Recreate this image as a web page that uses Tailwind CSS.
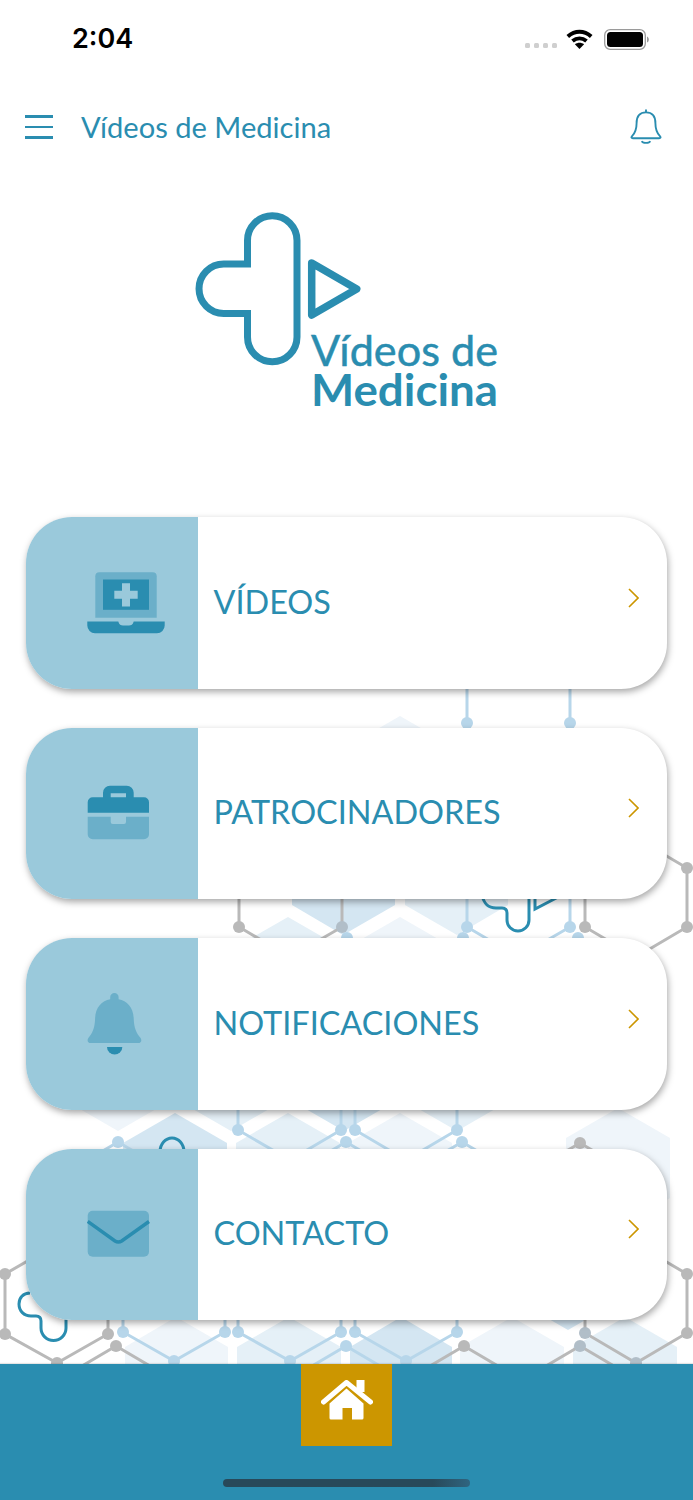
<!DOCTYPE html>
<html lang="es">
<head>
<meta charset="utf-8">
<title>Vídeos de Medicina</title>
<script src="https://cdn.jsdelivr.net/npm/@tailwindcss/browser@4"></script>
</head>
<body class="bg-white">
<div class="relative w-[693px] h-[1500px] overflow-hidden bg-white font-['Lato',sans-serif]">

  <!-- decorative hexagon network behind the cards -->
  <svg class="absolute top-0 left-0" width="693" height="1364" viewBox="0 0 693 1364" fill="none">
    <g>
      <polygon points="400,716 452,746 348,746" fill="#eff5fa"/>
      <!-- row around 905-935 -->
      <polygon points="292,860 395,860 395,905 343,935 292,905" fill="#d4e6f2"/>
      <polygon points="405,860 508,860 508,905 457,935 405,905" fill="#e5f0f7"/>
      <polygon points="288,917 340,947 340,960 236,960 236,947" fill="#e5f0f7"/>
      <polygon points="400,917 452,947 452,960 348,960 348,947" fill="#eff5fa"/>
      <!-- row around 1110-1145 -->
      <polygon points="66,1060 170,1060 170,1101 118,1131 66,1101" fill="#eff5fa"/>
      <polygon points="179,1060 283,1060 283,1101 231,1131 179,1101" fill="#e5f0f7"/>
      <polygon points="292,1060 396,1060 396,1101 344,1131 292,1101" fill="#d4e6f2"/>
      <polygon points="405,1060 509,1060 509,1101 457,1131 405,1101" fill="#e5f0f7"/>
      <polygon points="175,1113 227,1143 227,1160 123,1160 123,1143" fill="#d4e6f2"/>
      <polygon points="288,1113 340,1143 340,1160 236,1160 236,1143" fill="#e5f0f7"/>
      <polygon points="400,1113 452,1143 452,1160 348,1160 348,1143" fill="#eff5fa"/>
      <polygon points="618,1108 670,1138 670,1198 618,1228 566,1198 566,1138" fill="#eff5fa"/>
      <!-- row above the bottom bar -->
      <polygon points="516,1270 620,1270 620,1300 568,1330 516,1300" fill="#d4e6f2"/>
      <polygon points="176,1317 228,1347 228,1364 125,1364 125,1347" fill="#eff5fa"/>
      <polygon points="289,1317 341,1347 341,1364 237,1364 237,1347" fill="#e5f0f7"/>
      <polygon points="401,1317 452,1347 452,1364 350,1364 350,1347" fill="#d4e6f2"/>
      <polygon points="512,1317 564,1347 564,1364 460,1364 460,1347" fill="#eff5fa"/>
      <polygon points="625,1317 677,1347 677,1364 573,1364 573,1347" fill="#e5f0f7"/>
    </g>

    <g stroke="#b7d6ea" stroke-width="3" fill="#b7d6ea">
      <path fill="none" d="M467 664V723M570 664V723M467 868V927L518 957L570 927V868M463 938L412 968M463 938L514 968M578 938L527 968M578 938L629 968M347 938L296 968M347 938L398 968"/>
      <path fill="none" d="M238 1070V1130L290 1160L341 1130V1070M355 1070V1130L406 1160L457 1130V1070M118 1142L67 1172M118 1142L169 1172M346 1142L295 1172M346 1142L397 1172M462 1142L411 1172M462 1142L513 1172"/>
      <path fill="none" d="M123 1300V1332L174 1361L225 1332V1300M238 1300V1332L290 1361L341 1332V1300M355 1300V1332L406 1361L457 1332V1300M346 1346L295 1376M346 1346L397 1376"/>
      <g stroke="none">
        <circle cx="467" cy="723" r="6"/><circle cx="570" cy="723" r="6"/>
        <circle cx="467" cy="927" r="6"/><circle cx="570" cy="927" r="6"/><circle cx="463" cy="938" r="6"/><circle cx="578" cy="938" r="6"/><circle cx="347" cy="938" r="6"/>
        <circle cx="238" cy="1130" r="6"/><circle cx="341" cy="1130" r="6"/><circle cx="355" cy="1130" r="6"/><circle cx="457" cy="1130" r="6"/>
        <circle cx="118" cy="1142" r="6"/><circle cx="346" cy="1142" r="6"/><circle cx="462" cy="1142" r="6"/>
        <circle cx="123" cy="1332" r="6"/><circle cx="225" cy="1332" r="6"/><circle cx="238" cy="1332" r="6"/><circle cx="341" cy="1332" r="6"/><circle cx="355" cy="1332" r="6"/><circle cx="457" cy="1332" r="6"/>
        <circle cx="174" cy="1361" r="6"/><circle cx="290" cy="1361" r="6"/><circle cx="406" cy="1361" r="6"/><circle cx="346" cy="1346" r="6"/>
      </g>
    </g>

    <g stroke="#b9b9b9" stroke-width="3" fill="#b9b9b9">
      <path fill="none" d="M636 838L687 868V927L636 957L585 927V868M239 868V927L290 957L342 927V868"/>
      <path fill="none" d="M580 1143L529 1173M580 1143L631 1173"/>
      <path fill="none" d="M57 1244L5 1274V1334L57 1363L108 1334V1274M116 1346L65 1376M116 1346L167 1376M464 1346L413 1376M464 1346L515 1376M580 1346L529 1376M580 1346L631 1376M636 1244L687 1274V1333L636 1363L585 1333V1290"/>
      <g stroke="none">
        <circle cx="687" cy="868" r="6"/><circle cx="687" cy="927" r="6"/><circle cx="585" cy="927" r="6"/><circle cx="239" cy="927" r="6"/><circle cx="342" cy="927" r="6" fill="#b1bec8"/>
        <circle cx="580" cy="1143" r="6"/>
        <circle cx="5" cy="1274" r="6"/><circle cx="5" cy="1334" r="6"/><circle cx="108" cy="1334" r="6"/><circle cx="57" cy="1363" r="6"/><circle cx="116" cy="1346" r="6"/>
        <circle cx="464" cy="1346" r="6"/><circle cx="580" cy="1346" r="6" fill="#b1bec8"/><circle cx="585" cy="1333" r="6" fill="#b1bec8"/><circle cx="687" cy="1274" r="6"/><circle cx="687" cy="1333" r="6"/><circle cx="636" cy="1363" r="6" fill="#b1bec8"/>
      </g>
    </g>

    <!-- ghost logo fragments -->
    <g stroke="#2a8db0" stroke-width="3" fill="none">
      <path d="M482 895C484 904 488 908 496 908H502Q507 908 507 913V920A11 11 0 0 0 529 920V895"/>
      <path d="M535 895V909L562 895"/>
      <path d="M160 1152A12 14 0 0 1 184 1152"/>
      <path d="M30 1293C23 1293 19 1298 19 1304C19 1311 24 1316 31 1316H36Q41 1316 41 1321V1328A12.5 12.5 0 0 0 66 1328V1310"/>
    </g>
  </svg>

  <div class="relative flex flex-col h-[1500px]">
    <!-- status bar -->
    <div class="relative h-[78px] flex items-center justify-between pl-[72px] pr-[44px]">
      <span class="font-['Inter',sans-serif] font-semibold text-[27px] leading-[34px] text-black">2:04</span>
      <div class="flex items-center gap-[11px]">
        <svg width="33" height="6" viewBox="0 0 33 6" class="mt-[14px] mr-[-3px]"><g fill="#cfcfcf"><rect x="0" y="0" width="5" height="5" rx="1.5"/><rect x="9" y="0" width="5" height="5" rx="1.5"/><rect x="18" y="0" width="5" height="5" rx="1.500"/><rect x="27" y="0" width="5" height="5" rx="1.5"/></g></svg>
        <svg width="27" height="20" viewBox="0 0 27 20" fill="none" stroke="#000" stroke-width="4"><path d="M1.800 7.500C9 1.300 18 1.300 25.200 7.500"/><path d="M6.500 12C10.800 8.500 16.200 8.500 20.500 12"/><path d="M13.500 20L8.900 15.200C11.700 13.200 15.300 13.200 18.100 15.200Z" fill="#000" stroke="none"/></svg>
        <svg width="45" height="21" viewBox="0 0 45 21" fill="none"><rect x="0.7" y="0.7" width="40.6" height="19.6" rx="5.5" stroke="#9a9a9a" stroke-width="1.3"/><rect x="3" y="3" width="36" height="15" rx="3.5" fill="#000"/><path d="M43 7.500C44.200 8 44.800 9 44.800 10.500C44.800 12 44.200 13 43 13.500Z" fill="#9a9a9a"/></svg>
      </div>
    </div>

    <!-- header -->
    <div class="h-[98px] flex items-center pl-[25px] pr-[31px]">
      <div class="flex flex-col gap-[8px] w-[28px]">
        <div class="h-[2.5px] bg-[#2a8db0]"></div>
        <div class="h-[2.5px] bg-[#2a8db0]"></div>
        <div class="h-[2.5px] bg-[#2a8db0]"></div>
      </div>
      <span class="ml-[28px] text-[29.1px] leading-[36px] text-[#2a8db0]">Vídeos de Medicina</span>
      <svg class="ml-auto mt-[-2px]" width="32" height="36" viewBox="0 0 34 38" fill="none" stroke="#2a8db0" stroke-width="2" stroke-linejoin="round"><path d="M17 1.500V4.500"/><path d="M17 4.500C10 4.500 7 9.500 7 16C7 24 5 27 2 30C1 31 1.500 32 3 32H31C32.500 32 33 31 32 30C29 27 27 24 27 16C27 9.500 24 4.500 17 4.500Z"/><path d="M12.500 35C13.500 37.500 20.500 37.500 21.500 35"/></svg>
    </div>

    <!-- logo -->
    <div class="h-[341px]">
      <svg width="693" height="341" viewBox="0 176 693 341" fill="none">
        <path d="M247.500 264H223.700A24.700 24.700 0 0 0 223.700 313.400H247.500V337A24.750 24.750 0 0 0 297 337V240.500A24.750 24.750 0 0 0 247.500 240.500Z" stroke="#2a8db0" stroke-width="7"/>
        <path d="M311.700 263L356.700 289L311.700 315Z" stroke="#2a8db0" stroke-width="7.500" stroke-linejoin="round"/>
        <text x="311" y="366" font-family="Lato, sans-serif" font-size="43" fill="#2a8db0" stroke="#2a8db0" stroke-width="0.5" textLength="187" lengthAdjust="spacingAndGlyphs">Vídeos de</text>
        <text x="311" y="406" font-family="Lato, sans-serif" font-size="43" font-weight="700" fill="#2a8db0" textLength="187" lengthAdjust="spacingAndGlyphs">Medicina</text>
      </svg>
    </div>

    <!-- menu cards -->
    <div class="flex flex-col gap-[39px] px-[26px]">
      <div class="flex h-[171.5px] rounded-[46px] overflow-hidden bg-white shadow-[1px_3px_7px_rgba(0,0,0,0.35)]">
        <div class="w-[171.5px] bg-[#9ac9db] flex items-center pl-[61px]">
          <svg width="78" height="62" viewBox="87 571.5 78 62">
            <path d="M95.300 617.300V575.700A4 4 0 0 1 99.300 571.700H152.700A4 4 0 0 1 156.700 575.700V617.300Z" fill="#6bafc9"/>
            <rect x="103" y="579" width="46" height="30.3" fill="#2a8db0"/>
            <path d="M122 582.700H130V590.300H137.700V598.300H130V606H122V598.300H114.300V590.300H122Z" fill="#9ac9db"/>
            <path d="M87.300 621H118.300C119 624 121 625 123 625H129C131 625 133 624 133.700 621H164.700V625A7.700 7.700 0 0 1 157 632.700H95A7.700 7.700 0 0 1 87.300 625Z" fill="#2a8db0"/>
          </svg>
        </div>
        <div class="flex-1 flex items-center justify-between pl-[16px] pr-[28px]">
          <span class="text-[32.4px] leading-[40px] mt-[-2px] text-[#2a8db0]">VÍDEOS</span>
          <svg class="mt-[-10px]" width="11" height="20" viewBox="0 0 11 20" fill="none" stroke="#cc9600" stroke-width="1.6"><path d="M1 1L10 10L1 19"/></svg>
        </div>
      </div>

      <div class="flex h-[171.5px] rounded-[46px] overflow-hidden bg-white shadow-[1px_3px_7px_rgba(0,0,0,0.35)]">
        <div class="w-[171.5px] bg-[#9ac9db] flex items-center pl-[61px]">
          <svg width="64" height="56" viewBox="87 785 64 56">
            <path fill-rule="evenodd" d="M110 785.700H126.700A7 7 0 0 1 133.700 792.700V797.300H144A5 5 0 0 1 149 802.300V812.700H87.700V802.300A5 5 0 0 1 92.700 797.300H103V792.700A7 7 0 0 1 110 785.700ZM110.700 793.300V797.300H126V793.300Z" fill="#2a8db0"/>
            <path d="M87.700 816.700H110.700V822A2 2 0 0 0 112.700 824H124A2 2 0 0 0 126 822V816.700H149V834.300A5 5 0 0 1 144 839.300H92.700A5 5 0 0 1 87.700 834.300Z" fill="#6bafc9"/>
          </svg>
        </div>
        <div class="flex-1 flex items-center justify-between pl-[16px] pr-[28px]">
          <span class="text-[32.4px] leading-[40px] mt-[-2px] text-[#2a8db0]">PATROCINADORES</span>
          <svg class="mt-[-10px]" width="11" height="20" viewBox="0 0 11 20" fill="none" stroke="#cc9600" stroke-width="1.6"><path d="M1 1L10 10L1 19"/></svg>
        </div>
      </div>

      <div class="flex h-[171.5px] rounded-[46px] overflow-hidden bg-white shadow-[1px_3px_7px_rgba(0,0,0,0.35)]">
        <div class="w-[171.5px] bg-[#9ac9db] flex items-center pl-[61px]">
          <svg width="56" height="62" viewBox="87 992.5 56 62">
            <path d="M114.400 992.600A4.200 4.200 0 0 1 118.600 996.800V998.800C127 1000.500 133.500 1007 133.700 1018C134 1028 136.500 1032.500 140.400 1037.300C142.300 1039.600 141 1042.600 138.300 1042.600H90.600C87.900 1042.600 86.600 1039.600 88.500 1037.300C92.400 1032.500 94.800 1028 95.100 1018C95.300 1007 101.800 1000.500 110.200 998.800V996.800A4.200 4.200 0 0 1 114.400 992.600Z" fill="#6bafc9"/>
            <path d="M107 1046.400H122.300A7.650 7.650 0 0 1 107 1046.400Z" fill="#2a8db0"/>
          </svg>
        </div>
        <div class="flex-1 flex items-center justify-between pl-[16px] pr-[28px]">
          <span class="text-[32.4px] leading-[40px] mt-[-2px] text-[#2a8db0]">NOTIFICACIONES</span>
          <svg class="mt-[-10px]" width="11" height="20" viewBox="0 0 11 20" fill="none" stroke="#cc9600" stroke-width="1.6"><path d="M1 1L10 10L1 19"/></svg>
        </div>
      </div>

      <div class="flex h-[171.5px] rounded-[46px] overflow-hidden bg-white shadow-[1px_3px_7px_rgba(0,0,0,0.35)]">
        <div class="w-[171.5px] bg-[#9ac9db] flex items-center pl-[61px]">
          <svg width="64" height="48" viewBox="87 1210 64 48">
            <rect x="87.7" y="1210.7" width="61.3" height="46" rx="5" fill="#6bafc9"/>
            <path d="M87.700 1221.500L115 1241Q118.300 1243.200 121.700 1241L149 1221.500" fill="none" stroke="#2a8db0" stroke-width="3.4"/>
          </svg>
        </div>
        <div class="flex-1 flex items-center justify-between pl-[16px] pr-[28px]">
          <span class="text-[32.4px] leading-[40px] mt-[-2px] text-[#2a8db0]">CONTACTO</span>
          <svg class="mt-[-10px]" width="11" height="20" viewBox="0 0 11 20" fill="none" stroke="#cc9600" stroke-width="1.6"><path d="M1 1L10 10L1 19"/></svg>
        </div>
      </div>
    </div>

    <!-- bottom bar -->
    <div class="mt-auto relative h-[136px] bg-[#2a8db0] shadow-[0_-1px_1px_rgba(0,0,0,0.1)] flex flex-col items-center">
      <div class="w-[91px] h-[82px] bg-[#cc9600] flex justify-center pt-[16px]">
        <svg width="52" height="40" viewBox="320.5 1380 52 40">
          <path d="M323 1402L346 1382.500L370 1402" fill="none" stroke="#fff" stroke-width="5" stroke-linecap="round" stroke-linejoin="round"/>
          <rect x="356" y="1380" width="8" height="12" fill="#fff"/>
          <path d="M346 1388.500L363 1403.500V1418A1.500 1.500 0 0 1 361.500 1419.500H351.500V1408H342V1419.500H330.500A1.500 1.500 0 0 1 329 1418V1403.500Z" fill="#fff"/>
        </svg>
      </div>
      <div class="absolute left-[223px] top-[115px] w-[247px] h-[8px] rounded-full bg-gradient-to-r from-[#28495a] from-85% to-[#2f6580]"></div>
    </div>
  </div>
</div>
</body>
</html>
